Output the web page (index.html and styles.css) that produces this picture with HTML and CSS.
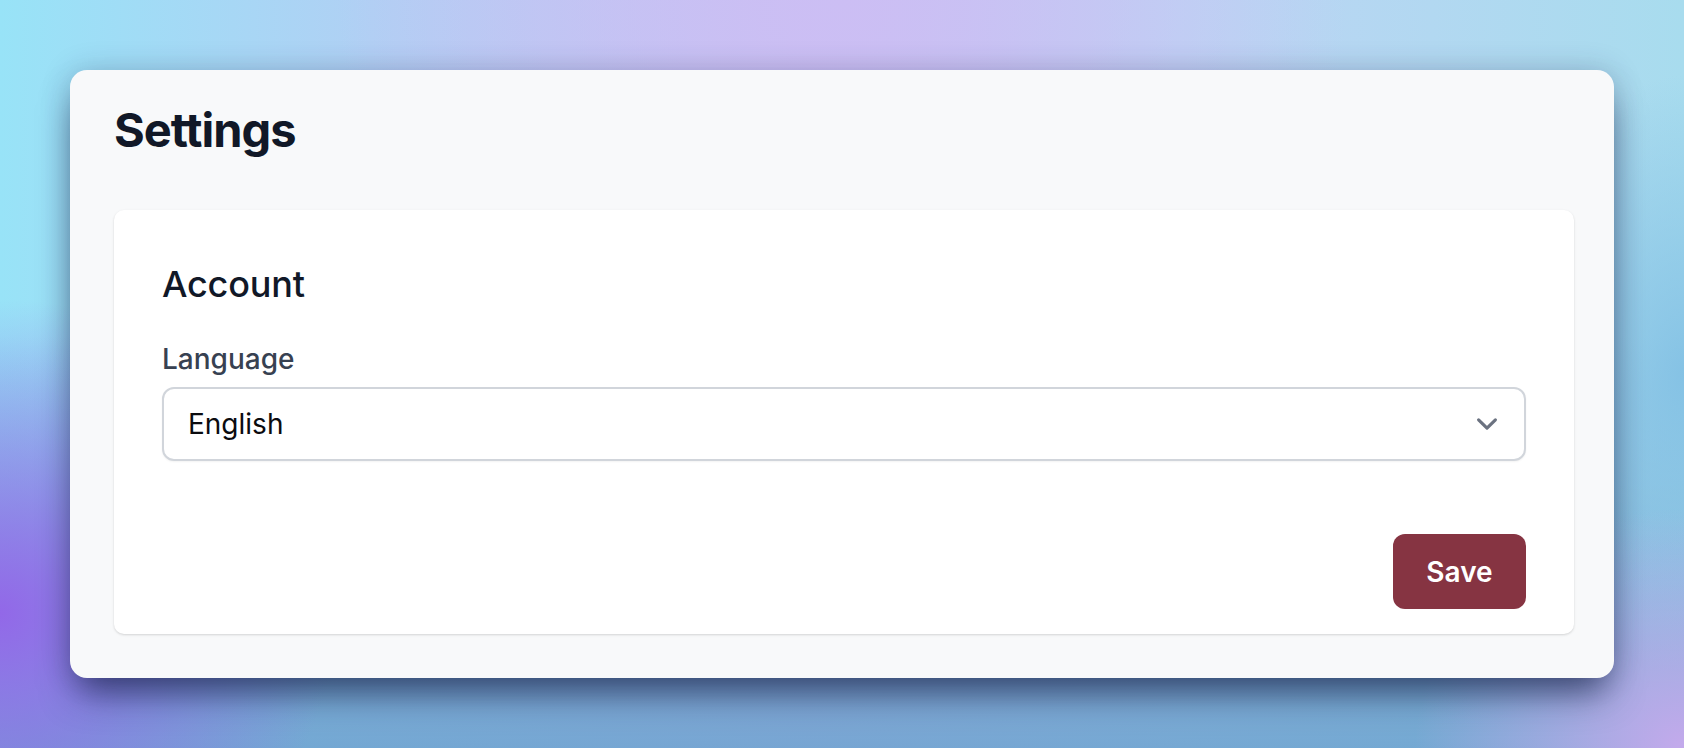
FILE: index.html
```html
<!DOCTYPE html>
<html lang="en">
<head>
<meta charset="utf-8">
<title>Settings</title>
<link rel="stylesheet" href="styles.css">
</head>
<body>
  <main class="window">
    <h1 class="page-title">Settings</h1>
    <section class="card">
      <h2 class="card-title">Account</h2>
      <label class="field-label" for="language">Language</label>
      <div class="select" id="language" role="combobox" aria-expanded="false">
        <span class="select-value">English</span>
        <svg class="chevron" viewBox="0 0 20 20" width="42" height="42" aria-hidden="true">
          <path d="M6 8l4 4 4-4" fill="none" stroke="#6b7280" stroke-width="1.5" stroke-linecap="round" stroke-linejoin="round"/>
        </svg>
      </div>
      <div class="card-footer">
        <button class="btn-save" type="button">Save</button>
      </div>
    </section>
  </main>
</body>
</html>
```

FILE: styles.css
```css
* {
  box-sizing: border-box;
}

html, body {
  margin: 0;
  height: 748px;
}

body {
  padding: 70px;
  font-family: Inter, "Noto Sans", "Liberation Sans", sans-serif;
  background:
    radial-gradient(ellipse 20% 42% at 0% 82%, rgba(146, 104, 232, 1) 0%, rgba(146, 104, 232, 0.6) 40%, rgba(146, 104, 232, 0) 100%),
    radial-gradient(ellipse 16% 32% at 100% 100%, rgba(196, 170, 236, 1) 0%, rgba(196, 170, 236, 0) 100%),
    radial-gradient(ellipse 10% 40% at 100% 50%, rgba(130, 192, 228, 0.9) 0%, rgba(130, 192, 228, 0) 100%),
    radial-gradient(ellipse 30% 60% at 50% 0%, rgba(204, 190, 244, 1) 0%, rgba(204, 190, 244, 0) 100%),
    linear-gradient(to bottom, rgba(120, 170, 205, 0) 45%, rgba(105, 160, 205, 0.85) 100%),
    linear-gradient(90deg, #98e3f7 0%, #b0d0f4 22%, #c6c2f2 48%, #bcd4f4 70%, #a8dcee 100%);
}

.window {
  height: 608px;
  background: #f8f9fa;
  border-radius: 17px;
  padding: 28px 40px 44px 44px;
  box-shadow:
    0 22px 36px -8px rgba(20, 30, 70, 0.7),
    0 0 30px rgba(30, 40, 80, 0.2);
}

.page-title {
  margin: 0 0 48px;
  font-size: 47px;
  line-height: 64px;
  font-weight: 700;
  letter-spacing: -1px;
  color: #111827;
}

.card {
  background: #ffffff;
  border-radius: 10px;
  padding: 48px 48px 25px 48px;
  box-shadow: 0 1px 3px rgba(0, 0, 0, 0.1), 0 1px 2px rgba(0, 0, 0, 0.06);
}

.card-title {
  margin: 0 0 29px;
  font-size: 36px;
  line-height: 52px;
  font-weight: 500;
  letter-spacing: -0.2px;
  color: #111827;
}

.field-label {
  display: block;
  margin-bottom: 8px;
  font-size: 28px;
  line-height: 40px;
  font-weight: 500;
  color: #374151;
}

.select {
  display: flex;
  align-items: center;
  justify-content: space-between;
  height: 74px;
  padding: 0 16px 0 24px;
  border: 2px solid #d1d5db;
  border-radius: 12px;
  background: #ffffff;
  box-shadow: 0 1px 2px rgba(0, 0, 0, 0.05);
  font-size: 28px;
  line-height: 40px;
  color: #0b0b0f;
}

.chevron {
  display: block;
  flex: none;
}

.card-footer {
  display: flex;
  justify-content: flex-end;
  margin-top: 73px;
}

.btn-save {
  width: 133px;
  height: 75px;
  border: 0;
  border-radius: 12px;
  background: #863442;
  color: #ffffff;
  font-family: inherit;
  font-size: 28px;
  font-weight: 600;
  cursor: pointer;
}
```
